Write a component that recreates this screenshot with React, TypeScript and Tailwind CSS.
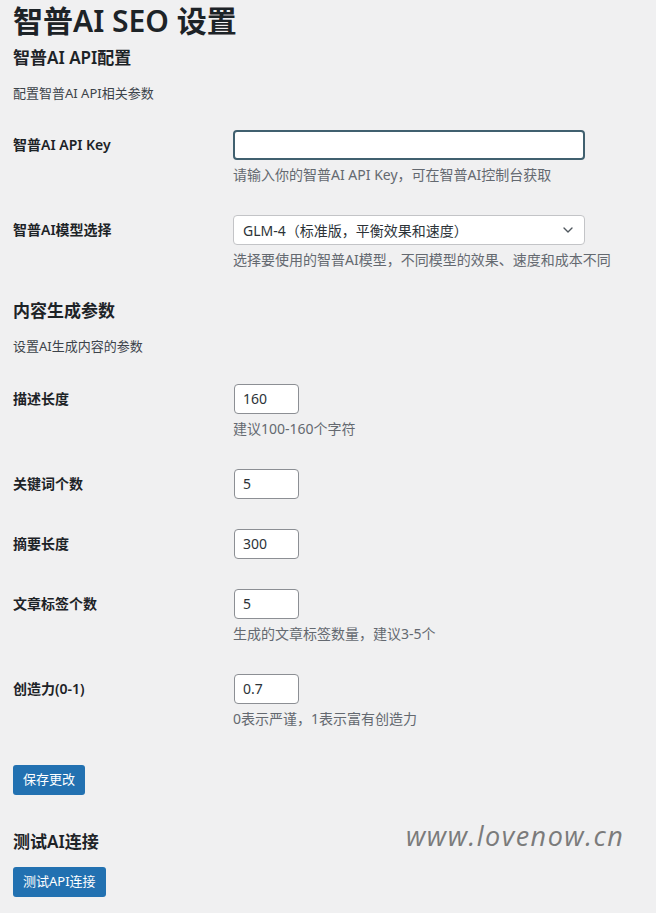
import { ChevronDown } from 'lucide-react';

const font = { fontFamily: '"Noto Sans", "Noto Sans CJK SC", sans-serif' };

type Field = { label: string; value: string; desc?: string };

const contentFields: Field[] = [
    { label: '描述长度', value: '160', desc: '建议100-160个字符' },
    { label: '关键词个数', value: '5' },
    { label: '摘要长度', value: '300' },
    { label: '文章标签个数', value: '5', desc: '生成的文章标签数量，建议3-5个' },
    { label: '创造力(0-1)', value: '0.7', desc: '0表示严谨，1表示富有创造力' },
];

function Row({ label, children }: { label: string; children: React.ReactNode }) {
    return (
        <div className="flex">
            <div className="w-[220px] shrink-0 pt-[21px] pb-[13px] text-[14px] leading-[18px] font-semibold text-[#1d2327]">
                {label}
            </div>
            <div className="py-[15px]">{children}</div>
        </div>
    );
}

function Desc({ text }: { text: string }) {
    return <p className="mt-[4px] text-[14px] leading-[21px] text-[#646970]">{text}</p>;
}

export default function App() {
    return (
        <div className="min-h-[913px] bg-[#f0f0f1] text-[#3c434a] pl-[13px] relative" style={font}>
            <h1 className="pt-[4px] text-[30px] leading-[34px] font-semibold text-[#1d2327]">智普AI SEO 设置</h1>

            {/* API section */}
            <h2 className="mt-[9px] text-[17px] leading-[22px] font-semibold text-[#1d2327]">智普AI API配置</h2>
            <p className="mt-[14px] text-[13px] leading-[20px]">配置智普AI API相关参数</p>

            <div className="mt-[12px]">
                <Row label="智普AI API Key">
                    <input
                        className="block w-[352px] h-[30px] rounded-[4px] border-2 border-[#40606f] bg-white px-2 outline-none"
                        defaultValue=""
                    />
                    <Desc text="请输入你的智普AI API Key，可在智普AI控制台获取" />
                </Row>
                <Row label="智普AI模型选择">
                    <div className="flex items-center justify-between w-[352px] h-[30px] rounded-[4px] border border-[#c3c4c7] bg-white pl-[9px] pr-[8px] text-[14px] text-[#2c3338]">
                        <span>GLM-4（标准版，平衡效果和速度）</span>
                        <ChevronDown size={16} strokeWidth={2} className="text-[#50575e]" />
                    </div>
                    <Desc text="选择要使用的智普AI模型，不同模型的效果、速度和成本不同" />
                </Row>
            </div>

            {/* content section */}
            <h2 className="mt-[15px] text-[17px] leading-[22px] font-semibold text-[#1d2327]">内容生成参数</h2>
            <p className="mt-[14px] text-[13px] leading-[20px]">设置AI生成内容的参数</p>

            <div className="mt-[13px]">
                {contentFields.map((f) => (
                    <Row key={f.label} label={f.label}>
                        <div className="ml-[1px] w-[65px] h-[30px] rounded-[4px] border border-[#8c8f94] bg-white pl-[8px] text-[14px] leading-[28px] text-[#2c3338]">
                            {f.value}
                        </div>
                        {f.desc && <Desc text={f.desc} />}
                    </Row>
                ))}
            </div>

            <button className="mt-[21px] h-[30px] rounded-[3px] bg-[#2271b1] px-[10px] text-[13px] text-white">
                保存更改
            </button>

            <h2 className="mt-[36px] text-[17px] leading-[22px] font-semibold text-[#1d2327]">测试AI连接</h2>
            <button className="mt-[14px] h-[30px] rounded-[3px] bg-[#2271b1] px-[10px] text-[13px] text-white">
                测试API连接
            </button>

            {/* watermark */}
            <div
                className="absolute left-[406px] top-[816px] text-[27px] italic tracking-[1.5px] text-[#7b7b7b]"
                style={{ fontFamily: '"Open Sans", sans-serif' }}
            >
                www.lovenow.cn
            </div>
        </div>
    );
}
